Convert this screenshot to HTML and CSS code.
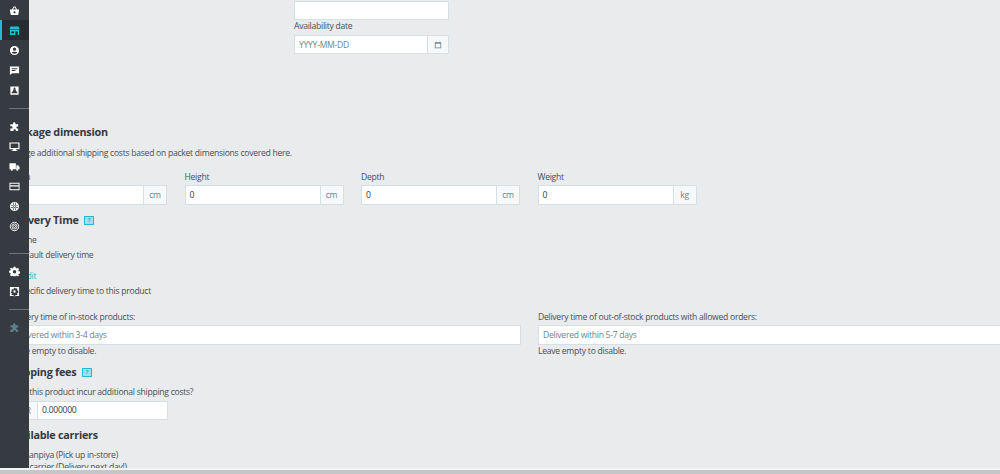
FILE: index.html
```html
<!DOCTYPE html>
<html lang="en">
<head>
<meta charset="utf-8">
<title>Product shipping</title>
<link rel="stylesheet" href="styles.css">
</head>
<body>
<nav class="sidebar">
  <div class="nav-item"><svg viewBox="0 0 12 12"><path d="M1 5h10v1l-1 5H2L1 6z M3.200 5 5 1.500h2L8.800 5H7.600L6.400 2.600H5.600L4.400 5z"/><circle class="cut" cx="6" cy="8" r="1.200"/></svg></div>
  <div class="nav-item nav-active"><svg viewBox="0 0 12 12"><path fill-rule="evenodd" d="M1.500 1.500h9l1 3.500H.5zM1 5.500h10V11H1zM7 7v4h2.500V7zM2.500 7v2h3V7z"/></svg></div>
  <div class="nav-item"><svg viewBox="0 0 12 12"><path fill-rule="evenodd" d="M6 1a5 5 0 1 1 0 10A5 5 0 0 1 6 1zm0 1.800a1.800 1.800 0 1 0 0 3.600 1.800 1.800 0 0 0 0-3.600zM2.900 8.500c1.500 1.300 4.700 1.300 6.200 0C8.300 7 3.700 7 2.900 8.500z"/></svg></div>
  <div class="nav-item"><svg viewBox="0 0 12 12"><path fill-rule="evenodd" d="M1 1.500h10v7.500H3.500L1 11zM3 3.500v1h6v-1zM3 5.500v1h4v-1z"/></svg></div>
  <div class="nav-item"><svg viewBox="0 0 12 12"><path fill-rule="evenodd" d="M1.500 1.500h9v9h-9zM3 9h6V7.500L7.500 6.500V5H4.500V6.500L3 7.500zM6 2.800a1.100 1.100 0 1 0 0 2.200 1.100 1.100 0 0 0 0-2.200z"/></svg></div>
  <hr class="nav-rule nav-rule-a">
  <div class="nav-item"><svg viewBox="0 0 12 12"><path d="M4.500 2.500C4.500 1 7 1 7 2.500V3.500H10V6.200C8.500 5.500 8 6.500 8 7.200S8.800 8.800 10 8.300V11H7.300C8 9.700 7 9 6.200 9S4.300 9.700 5 11H1.500V8C3 8.800 3.800 7.800 3.800 7S3 5.300 1.500 6V3.500h3z"/></svg></div>
  <div class="nav-item"><svg viewBox="0 0 12 12"><path fill-rule="evenodd" d="M.5 1.500h11v7.500H7.500v1H9v1H3v-1h1.500V9H.5zM1.800 2.800v4.900h8.400V2.800z"/></svg></div>
  <div class="nav-item"><svg viewBox="0 0 12 12"><path d="M.5 2.500h7v6.500H.5zM8 4.500h2l1.500 2V9H8z"/><circle cx="3" cy="9.500" r="1.200"/><circle cx="9" cy="9.500" r="1.200"/></svg></div>
  <div class="nav-item"><svg viewBox="0 0 12 12"><path fill-rule="evenodd" d="M.5 2h11v8H.5zM1.500 3v1.500h9V3zM1.500 6v3h9V6z"/></svg></div>
  <div class="nav-item"><svg viewBox="0 0 12 12"><path fill-rule="evenodd" d="M6 1a5 5 0 1 1 0 10A5 5 0 0 1 6 1zM2 4.600v.7h8v-.7zM2 6.800v.7h8v-.7zM4.800 2v8h.7V2zM6.600 2v8h.7V2z"/></svg></div>
  <div class="nav-item"><svg viewBox="0 0 12 12"><g class="rings"><circle cx="6" cy="6" r="4.600"/><circle cx="6" cy="6" r="2.800"/><circle cx="6" cy="6" r="1.100"/></g></svg></div>
  <hr class="nav-rule nav-rule-b">
  <div class="nav-item"><svg viewBox="0 0 12 12"><path fill-rule="evenodd" d="M5 .8h2l.3 1.500 1.100.5L9.700 2l1.300 1.500-.9 1.200.4 1.100 1.500.3v2l-1.500.3-.4 1.100.9 1.200L9.700 11.300 8.400 10.500l-1.100.5L7 11.200H5L4.700 11l-1.100-.5-1.300.8L1 9.800l.9-1.200-.4-1.100L0 7.200v-2l1.500-.3.4-1.100L1 2.600 2.300 2l1.300.8 1.100-.5zM6 4.300a1.900 1.900 0 1 0 0 3.800 1.900 1.900 0 0 0 0-3.800z"/></svg></div>
  <div class="nav-item"><svg viewBox="0 0 12 12"><path fill-rule="evenodd" d="M1 1h10v10H1zM5.300 2.500l-.2 1-.8.400-.9-.5-.8.900.6.800-.3.900-1 .2v1.200l1 .2.300.9-.6.800.8.900.9-.5.800.4.200 1h1.400l.2-1 .8-.4.900.5.800-.9-.6-.8.300-.9 1-.2V5.200l-1-.2-.3-.9.600-.8-.8-.9-.9.500-.8-.4-.2-1zM6 4.700a1.300 1.300 0 1 1 0 2.600 1.300 1.300 0 0 1 0-2.600z"/></svg></div>
  <hr class="nav-rule nav-rule-c">
  <div class="nav-item nav-muted"><svg viewBox="0 0 12 12"><path d="M4.500 2.500C4.500 1 7 1 7 2.500V3.500H10V6.200C8.500 5.500 8 6.500 8 7.200S8.800 8.800 10 8.300V11H7.300C8 9.700 7 9 6.200 9S4.300 9.700 5 11H1.500V8C3 8.800 3.800 7.800 3.800 7S3 5.300 1.500 6V3.500h3z"/></svg></div>
</nav>

<main class="page">
  <section class="top-fields">
    <div class="input blank"></div>
    <label class="label label-avail">Availability date</label>
    <div class="group group-date">
      <div class="input placeholder">YYYY-MM-DD</div>
      <div class="addon"><svg class="cal" viewBox="0 0 10 10"><path fill-rule="evenodd" d="M1 1.500h8v7.500H1zM2 3.500V8h6V3.500z"/><path d="M2.500.8h1v1.500h-1zM6.500.8h1v1.500h-1z"/></svg></div>
    </div>
  </section>

  <section class="package">
    <h2 class="heading">Package dimension</h2>
    <p class="text desc">Charge additional shipping costs based on packet dimensions covered here.</p>
    <div class="dims">
      <div class="field"><label class="label">Width</label><div class="group"><div class="input">0</div><div class="addon">cm</div></div></div>
      <div class="field"><label class="label">Height</label><div class="group"><div class="input">0</div><div class="addon">cm</div></div></div>
      <div class="field"><label class="label">Depth</label><div class="group"><div class="input">0</div><div class="addon">cm</div></div></div>
      <div class="field"><label class="label">Weight</label><div class="group"><div class="input">0</div><div class="addon">kg</div></div></div>
    </div>
  </section>

  <section class="delivery">
    <h2 class="heading">Delivery Time <span class="help">?</span></h2>
    <p class="text opt opt-none">None</p>
    <p class="text opt opt-default">Default delivery time</p>
    <a class="edit">Edit</a>
    <p class="text opt opt-specific">Specific delivery time to this product</p>
    <div class="times">
      <div class="time">
        <label class="label">Delivery time of in-stock products:</label>
        <div class="input placeholder">Delivered within 3-4 days</div>
        <p class="text hint">Leave empty to disable.</p>
      </div>
      <div class="time time-wide">
        <label class="label">Delivery time of out-of-stock products with allowed orders:</label>
        <div class="input placeholder">Delivered within 5-7 days</div>
        <p class="text hint">Leave empty to disable.</p>
      </div>
    </div>
  </section>

  <section class="fees">
    <h2 class="heading">Shipping fees <span class="help">?</span></h2>
    <label class="label label-fee">Does this product incur additional shipping costs?</label>
    <div class="group group-fee">
      <div class="addon addon-left">EUR</div>
      <div class="input">0.000000</div>
    </div>
  </section>

  <section class="carriers">
    <h2 class="heading">Available carriers</h2>
    <p class="text opt carrier-a">Kanpiya (Pick up in-store)</p>
    <p class="text opt carrier-b">My carrier (Delivery next day!)</p>
  </section>
</main>
<div class="bottom-bar"></div>
</body>
</html>
```
FILE: styles.css
```css
* { box-sizing: border-box; }
html, body { margin: 0; height: 474px; overflow: hidden; }
body {
  background: #e9ebed;
  color: #363a41;
  font-family: "Open Sans", "Noto Sans", sans-serif;
  font-size: 8.600px;
  letter-spacing: -.27px;
  line-height: 12px;
}
.sidebar {
  position: absolute; left: 0; top: 0; bottom: 0; width: 28.500px;
  background: #363a41; z-index: 2;
}
.nav-item { height: 20px; display: flex; align-items: center; justify-content: center; }
.nav-item svg { width: 11px; height: 11px; fill: #fff; }
.nav-active { background: #282b30; border-left: 2px solid #25b9d7; padding-right: 2px; }
.nav-active svg { fill: #25b9d7; }
.nav-muted svg { fill: #607d8b; }
.rings circle { fill: none; stroke: #fff; stroke-width: 1; }
.cut { fill: #363a41; }
.nav-rule { height: 1px; border: 0; background: #70757c; margin: 0 0 0 9px; }
.nav-rule-a { margin-top: 8px; margin-bottom: 7px; }
.nav-rule-b { margin-top: 17px; margin-bottom: 7px; }
.nav-rule-c { margin-top: 8px; margin-bottom: 7px; }

.page { padding: 1px 0 0 8px; width: 100%; }
.label { display: block; color: #4a4f56; }
.text { margin: 0; color: #4a4f56; }
.heading { margin: 0; font-size: 10.800px; letter-spacing: -.25px; line-height: 14px; font-weight: 700; color: #363a41; }
.input {
  flex: 1; height: 20px; background: #fff; border: 1px solid #d3e0e5;
  padding: 0 4px; line-height: 18px; color: #363a41; white-space: nowrap;
}
.placeholder { color: #6c868e; }
.group { display: flex; height: 20px; }
.addon {
  width: 23px; background: #f6f8f9; border: 1px solid #d3e0e5; border-left: 0;
  color: #6c868e; text-align: center; line-height: 18px;
  display: flex; align-items: center; justify-content: center;
}
.addon-left { width: 29px; border-left: 1px solid #d3e0e5; border-right: 0; }

.top-fields { margin-left: 286px; width: 155px; }
.blank { height: 19px; flex: none; }
.label-avail { height: 15px; }
.group-date { height: 19px; }
.group-date .input { height: 19px; line-height: 18px; }
.group-date .addon { width: 21px; }
.cal { width: 8px; height: 8px; fill: #6c868e; }

.package { margin-top: 71px; }
.desc { margin-top: 8px; }
.dims { display: flex; gap: 17.500px; margin-top: 12px; }
.field { width: 159px; }
.field .label { height: 14px; }

.delivery { margin-top: 8px; }
.opt { padding-left: 8px; }
.opt-none { margin-top: 7px; }
.opt-default { margin-top: 3px; }
.edit { display: block; margin-top: 9px; padding-left: 14px; color: #25b9d7; }
.opt-specific { margin-top: 3px; }
.times { display: flex; gap: 17px; margin-top: 14px; }
.time { width: 513px; flex: none; }
.time-wide { flex: 1; width: auto; }
.time-wide .input { border-right: 0; }
.time .label { height: 14px; }
.time .input { height: 20px; line-height: 18px; }
.help {
  display: inline-block; width: 10px; height: 9px; margin-left: 3px; vertical-align: 2px;
  background: #9fe0ee; border: 1.500px solid #25b9d7; color: #25b9d7;
  font-size: 6px; line-height: 6px; letter-spacing: 0; text-align: center;
}

.fees { margin-top: 8px; }
.label-fee { margin-top: 7px; height: 15px; }
.group-fee { width: 160px; height: 19px; }
.group-fee .input { height: 19px; line-height: 17px; }

.carriers { margin-top: 8px; }
.carrier-a { margin-top: 7px; padding-left: 16px; }
.carrier-b { margin-top: 0; }

.bottom-bar {
  position: absolute; left: 0; right: 0; top: 468px; bottom: 0;
  background: #c4c6c7; border-top: 2px solid #f3f4f5; z-index: 3;
}
```
